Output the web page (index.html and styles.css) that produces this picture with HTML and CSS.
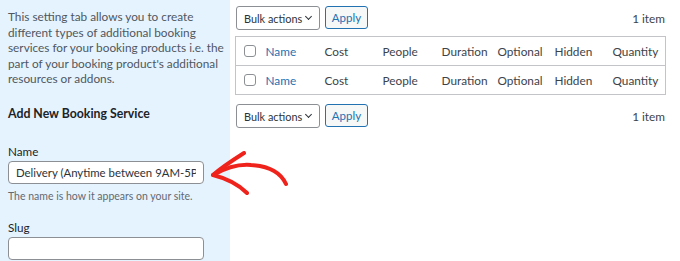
FILE: index.html
```html
<!DOCTYPE html>
<html lang="en">
<head>
  <meta charset="UTF-8">
  <title>Booking Services</title>
  <link rel="stylesheet" href="styles.css">
</head>
<body>
  <div class="page">
    <!-- Left column: add new service form -->
    <aside class="side">
      <p class="intro">This setting tab allows you to create different types of additional booking services for your booking products i.e. the part of your booking product's additional resources or addons.</p>
      <h2>Add New Booking Service</h2>
      <div class="field">
        <label>Name</label>
        <input type="text" value="Delivery (Anytime between 9AM-5PM)">
        <p class="hint">The name is how it appears on your site.</p>
      </div>
      <div class="field">
        <label>Slug</label>
        <input type="text" value="">
      </div>
    </aside>

    <!-- Right column: list table -->
    <main class="list">
      <div class="tablenav">
        <div class="bulk">
          <div class="select"><span>Bulk actions</span><span class="caret"></span></div>
          <button class="apply">Apply</button>
        </div>
        <span class="count">1 item</span>
      </div>

      <table class="services">
        <thead>
          <tr>
            <td class="cb"><span class="box"></span></td>
            <td class="link">Name</td>
            <td>Cost</td>
            <td>People</td>
            <td>Duration</td>
            <td>Optional</td>
            <td>Hidden</td>
            <td class="qty">Quantity</td>
          </tr>
        </thead>
        <tfoot>
          <tr>
            <td class="cb"><span class="box"></span></td>
            <td class="link">Name</td>
            <td>Cost</td>
            <td>People</td>
            <td>Duration</td>
            <td>Optional</td>
            <td>Hidden</td>
            <td class="qty">Quantity</td>
          </tr>
        </tfoot>
      </table>

      <div class="tablenav">
        <div class="bulk">
          <div class="select"><span>Bulk actions</span><span class="caret"></span></div>
          <button class="apply">Apply</button>
        </div>
        <span class="count">1 item</span>
      </div>
    </main>
  </div>

  <!-- hand drawn pointer -->
  <svg class="arrow" width="90" height="50" viewBox="0 0 90 50">
    <path d="M4 24 C18 16 30 13 42 14 C60 15 72 22 77 33" fill="none" stroke="#f0231c" stroke-width="4" stroke-linecap="round"/>
    <path d="M35 2 C24 9 12 17 4 24 C16 27 28 32 38 42" fill="none" stroke="#f0231c" stroke-width="4" stroke-linecap="round" stroke-linejoin="round"/>
  </svg>
</body>
</html>
```

FILE: styles.css
```css
* {
  box-sizing: border-box;
  margin: 0;
  padding: 0;
}
body {
  font-family: "Lato", "Open Sans", sans-serif;
  background-color: #fff;
  color: #3c434a;
  width: 680px;
  height: 261px;
  overflow: hidden;
}

.page {
  display: flex;
  height: 261px;
}

/* Left column */
.side {
  width: 230px;
  flex: none;
  background-color: #e5f3ff;
  padding: 9px 4px 0 8px;
}
.intro {
  font-size: 11.8px;
  line-height: 15.6px;
  color: #50575e;
}
.side h2 {
  font-size: 12.3px;
  font-weight: 700;
  color: #1d2327;
  margin-top: 19px;
  margin-bottom: 23px;
}
.field label {
  display: block;
  font-size: 11.7px;
  color: #1d2327;
  margin-bottom: 3px;
}
.field input {
  width: 196px;
  height: 23px;
  border: 1px solid #8c8f94;
  border-radius: 4px;
  padding: 0 7px;
  font-family: inherit;
  font-size: 11.4px;
  color: #2c3338;
  background: #fff;
}
.hint {
  font-size: 10.5px;
  color: #646970;
  margin-top: 6px;
  margin-bottom: 18px;
}

/* Right column */
.list {
  flex: 1;
  padding: 6px 15px 0 5px;
}
.tablenav {
  display: flex;
  justify-content: space-between;
  align-items: center;
  height: 24px;
  margin-left: 1px;
}
.tablenav + .services {
  margin-top: 6px;
}
.services + .tablenav {
  margin-top: 9px;
}
.bulk {
  display: flex;
  gap: 5px;
}
.select {
  display: flex;
  align-items: center;
  justify-content: space-between;
  white-space: nowrap;
  width: 84px;
  height: 24px;
  border: 1px solid #8c8f94;
  border-radius: 3px;
  font-size: 10.9px;
  color: #2c3338;
  padding: 0 8px 0 7px;
  background: #fff;
}
.caret {
  display: block;
  flex: none;
  width: 5px;
  height: 5px;
  border-right: 1.3px solid #2c3338;
  border-bottom: 1.3px solid #2c3338;
  transform: rotate(45deg);
  margin-bottom: 3px;
}
.apply {
  width: 43px;
  height: 23px;
  border: 1px solid #2271b1;
  border-radius: 3px;
  background: #f6f7f7;
  color: #2271b1;
  font-family: inherit;
  font-size: 11.5px;
}
.count {
  font-size: 11.8px;
  color: #3c434a;
  margin-right: 1px;
}

/* Table */
.services {
  width: 431px;
  border-collapse: collapse;
  border: 1px solid #c3c4c7;
  font-size: 11.8px;
  color: #3c434a;
}
.services tr {
  height: 29px;
}
.services thead tr {
  border-bottom: 1px solid #c3c4c7;
}
.services td {
  padding: 0;
  vertical-align: middle;
}
.services td.cb {
  width: 30px;
  padding-left: 8px;
}
.box {
  display: block;
  width: 12px;
  height: 12px;
  border: 1px solid #8c8f94;
  border-radius: 3px;
  background: #fff;
}
.services td.link {
  color: #2271b1;
  width: 59px;
}
.services td:nth-child(3) { width: 58px; }
.services td:nth-child(4) { width: 59px; }
.services td:nth-child(5) { width: 56px; }
.services td:nth-child(6) { width: 57px; }
.services td:nth-child(7) { width: 58px; }

/* Red pointer over the form */
.arrow {
  position: absolute;
  left: 209px;
  top: 151px;
}
```
